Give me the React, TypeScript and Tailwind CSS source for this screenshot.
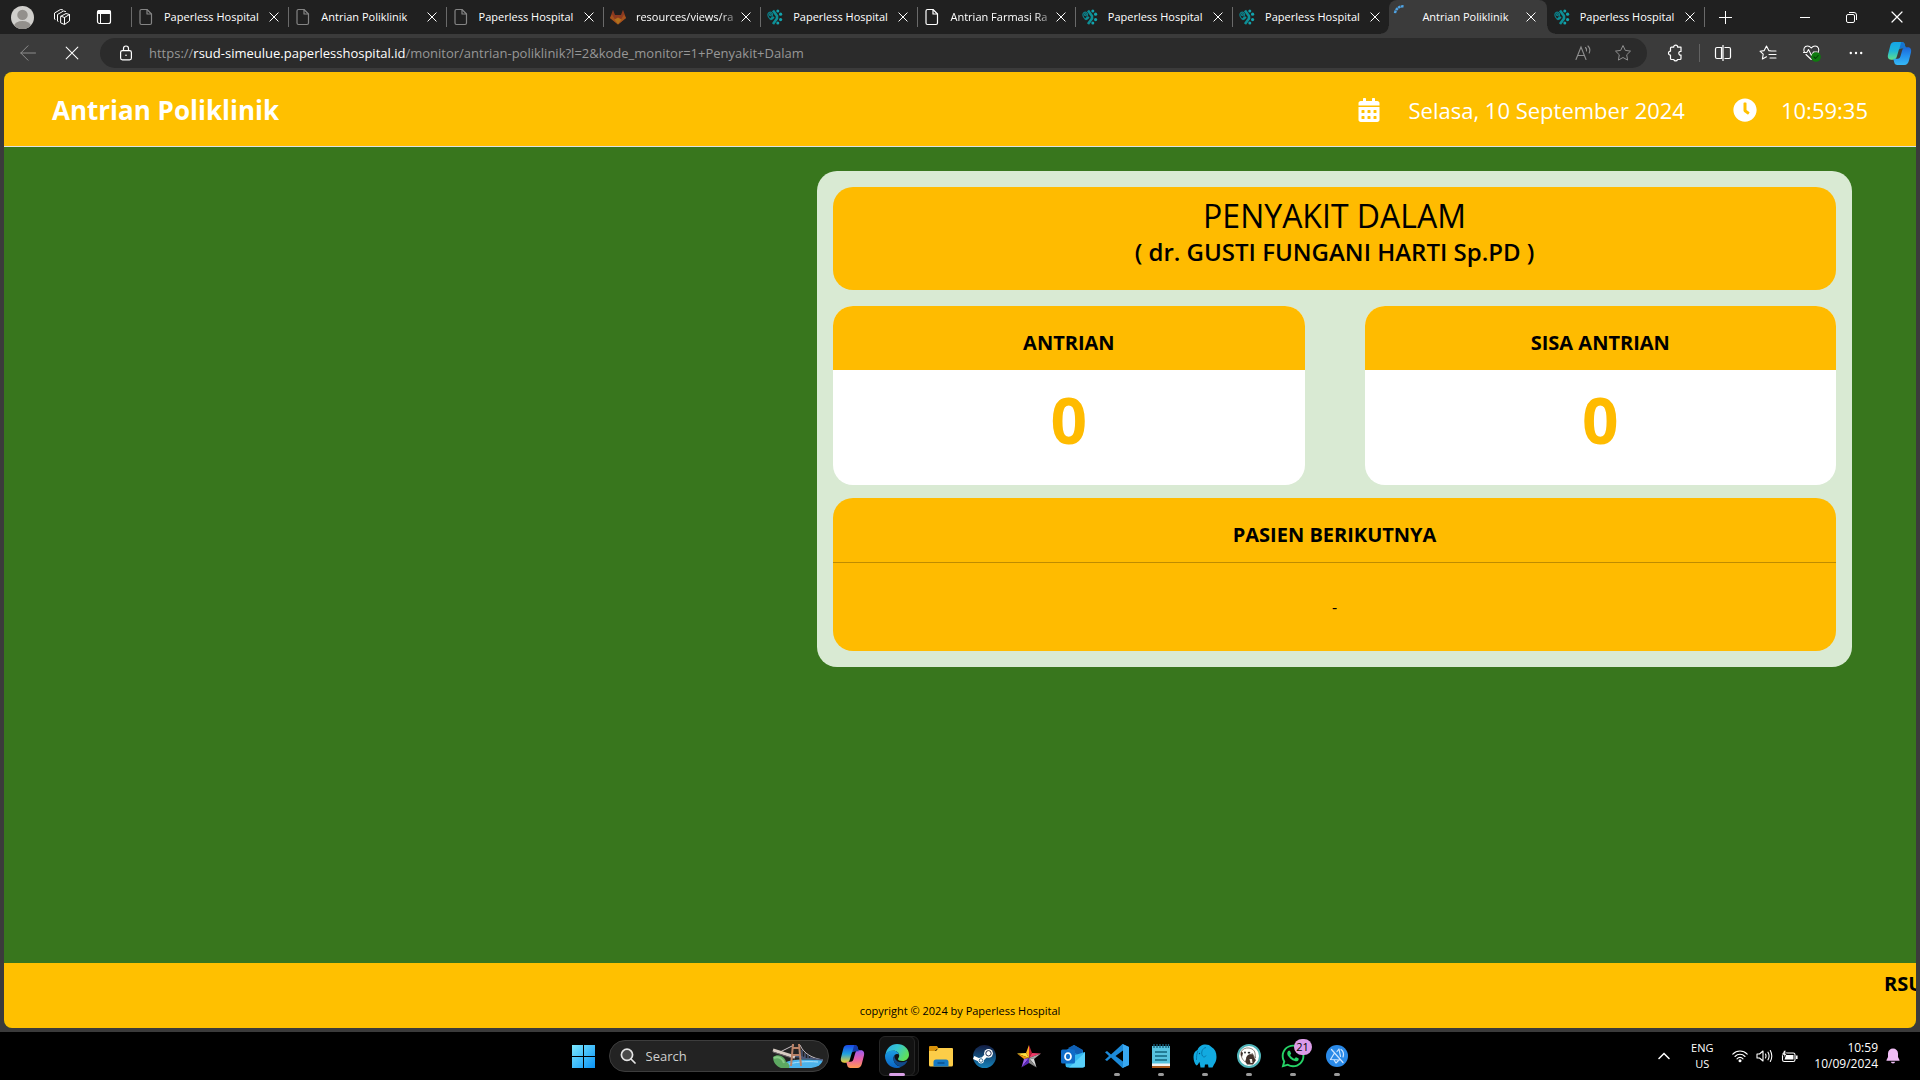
import React from "react";
import { FaCalendarAlt, FaClock, FaWhatsapp } from "react-icons/fa";

type TabIcon = "doc" | "docBright" | "gitlab" | "hospital" | "loading";

const TABS: { title: string; icon: TabIcon; active?: boolean }[] = [
  { title: "Paperless Hospital", icon: "doc" },
  { title: "Antrian Poliklinik", icon: "doc" },
  { title: "Paperless Hospital", icon: "doc" },
  { title: "resources/views/ra", icon: "gitlab" },
  { title: "Paperless Hospital", icon: "hospital" },
  { title: "Antrian Farmasi Ra", icon: "docBright" },
  { title: "Paperless Hospital", icon: "hospital" },
  { title: "Paperless Hospital", icon: "hospital" },
  { title: "Antrian Poliklinik", icon: "loading", active: true },
  { title: "Paperless Hospital", icon: "hospital" },
];

function Cross({ size, thin }: { size: number; thin?: boolean }) {
  return (
    <svg width={size} height={size} viewBox="0 0 12 12" fill="none" stroke="currentColor" strokeWidth={thin ? 0.9 : 1.2} strokeLinecap="round">
      <path d="M1 1l10 10M11 1L1 11" />
    </svg>
  );
}

function Favicon({ kind }: { kind: TabIcon }) {
  if (kind === "gitlab")
    return (
      <svg width="16" height="16" viewBox="0 0 16 16">
        <path d="M3 .8L5 6h6l2-5.200 3 8.200-8 6.500L0 9z" fill="#8c3a20" />
        <path d="M0 9l2-3.500L8 15.500zM16 9l-2-3.500L8 15.500z" fill="#a4521c" />
        <path d="M4.500 10.500L8 8.500l3.500 2L8 15.500z" fill="#b0701c" />
      </svg>
    );
  if (kind === "hospital")
    return (
      <svg width="16" height="16" viewBox="0 0 16 16">
        <g fill="none" stroke="#0b7f88" strokeWidth="1.2">
          <path d="M3.5 10.5C1.2 8.6.4 6.400 1.200 4.500S4.500 2.600 5.300 4.500 5 8.500 3.500 10.500z" />
          <circle cx="3.400" cy="5.600" r="1" />
        </g>
        <path d="M6 1.500l4 5.500v2.500l-4 5.500" fill="none" stroke="#0d8f96" strokeWidth="2.600" strokeLinejoin="round" />
        <path d="M4 10.500l3-2.500" stroke="#0d8f96" strokeWidth="2" />
        <g fill="#12a3ad">
          <circle cx="10.800" cy="2" r="1.500" />
          <circle cx="13.600" cy="5.200" r="1.600" />
          <circle cx="13.600" cy="10.600" r="1.600" />
          <circle cx="10.800" cy="14" r="1.500" />
        </g>
      </svg>
    );
  if (kind === "loading")
    return (
      <svg width="18" height="18" viewBox="0 0 18 18">
        <path d="M2 7.500A8 8 0 0 1 11 .8" transform="translate(0 .6)" fill="none" stroke="#4fa3e3" strokeWidth="2.400" strokeDasharray="2.600 .5" />
      </svg>
    );
  return (
    <svg
      width="16"
      height="18"
      viewBox="0 0 16 18"
      fill="none"
      strokeWidth="1.200"
      strokeLinejoin="round"
      className={kind === "docBright" ? "stroke-white" : "stroke-[#858585]"}
    >
      <path d="M3.500 1.500h5.500l4.500 4.500v9a1.500 1.500 0 0 1-1.500 1.500h-8.500a1.500 1.500 0 0 1-1.500-1.500v-12a1.500 1.500 0 0 1 1.500-1.500z" />
      <path d="M9 1.500v4.500h4.500" />
    </svg>
  );
}

function TabStrip() {
  return (
    <div className="flex h-[34px] flex-none bg-[#202020] text-white">
      <div className="flex w-[131px] flex-none items-center pl-0.5">
        <button aria-label="Profile" className="flex w-10 justify-center">
          <svg width="23" height="23" viewBox="0 0 22 22">
            <clipPath id="face"><circle cx="11" cy="11" r="11" /></clipPath>
            <g clipPath="url(#face)">
              <rect width="22" height="22" fill="#d0cfcc" />
              <circle cx="11" cy="8.500" r="5" fill="#93908c" />
              <ellipse cx="11" cy="19" rx="8" ry="4.600" fill="#93908c" />
            </g>
          </svg>
        </button>
        <button aria-label="Workspaces" className="flex w-10 justify-center">
          <svg width="18" height="18" viewBox="0 0 18 18" fill="none" stroke="#fff" strokeLinejoin="round" strokeLinecap="round">
            <path d="M8 8.200l5-2.700 3.500 1v6.500l-5 3.500-3.500-1.500z" />
            <path d="M5 13.500l-.5-.5V6.500l6-3.500 2 .5M2 11.500l-.5-.5V5L7.500 1.500l2 .3" />
            <path d="M8 8.200l3.500 1.300v6.500M11.500 9.500l5-3" />
          </svg>
        </button>
        <button aria-label="Tab actions" className="flex w-11 justify-center">
          <svg width="16" height="16" viewBox="0 0 16 16">
            <rect x="1.500" y="1.500" width="13" height="13" rx="2" fill="none" stroke="#fff" strokeWidth="1.200" />
            <path d="M1 3a2 2 0 0 1 2-2h10a2 2 0 0 1 2 2v2H1z" fill="#fff" />
            <path d="M4.500 5v10" stroke="#fff" />
          </svg>
        </button>
      </div>
      <div role="tablist" className="flex min-w-0 flex-1">
        {TABS.map((tab, i) => (
          <div
            key={i}
            className={
              tab.active
                ? "relative flex min-w-0 flex-1 items-center rounded-t-lg bg-[#3b3b3b] pr-2 pl-1"
                : "relative flex min-w-0 flex-1 items-center px-1.5"
            }
          >
            {!tab.active && i !== 9 && <span className="absolute top-[7px] left-0 h-5 w-px bg-[#6a6a6a]" />}
            {tab.active && (
              <>
                <span className="absolute bottom-0 -left-2 size-2 bg-[radial-gradient(circle_at_0_0,#202020_7px,#3b3b3b_8px)]" />
                <span className="absolute -right-2 bottom-0 size-2 bg-[radial-gradient(circle_at_100%_0,#202020_7px,#3b3b3b_8px)]" />
              </>
            )}
            <button role="tab" aria-selected={!!tab.active} className="flex min-w-0 flex-1 items-center text-left">
              <span className={tab.active ? "mb-1.5 flex w-[18px] flex-none justify-center" : "flex w-[18px] flex-none justify-center"}>
                <Favicon kind={tab.icon} />
              </span>
              <span
                className={
                  (tab.active ? "ml-[11px] " : "ml-[9px] ") +
                  "flex-1 overflow-hidden text-[11px] leading-4 whitespace-nowrap" +
                  (tab.title.endsWith("ra") || tab.title.endsWith("Ra")
                    ? " [mask-image:linear-gradient(to_right,#000_82%,#0003_100%)]"
                    : "")
                }
              >
                {tab.title}
              </span>
            </button>
            <button aria-label="Close tab" className="flex size-4 flex-none items-center justify-center">
              <Cross size={10} />
            </button>
          </div>
        ))}
      </div>
      <div className="flex w-[216px] flex-none">
        <button aria-label="New tab" className="relative flex w-[42px] items-center justify-center">
          <span className="absolute top-[7px] left-0 h-5 w-px bg-[#6a6a6a]" />
          <svg width="15" height="15" viewBox="0 0 15 15" stroke="#fff"><path d="M7.500 1v13M1 7.500h13" /></svg>
        </button>
        <div className="ml-auto flex">
          <button aria-label="Minimize" className="flex w-[46px] items-center justify-center">
            <span className="h-px w-2.5 bg-white" />
          </button>
          <button aria-label="Restore" className="flex w-[46px] items-center justify-center">
            <svg width="11" height="11" viewBox="0 0 11 11" fill="none" stroke="#fff">
              <rect x=".5" y="2.500" width="8" height="8" rx="1.500" />
              <path d="M3 .5h5a2.500 2.500 0 0 1 2.500 2.500v5" />
            </svg>
          </button>
          <button aria-label="Close" className="flex w-[46px] items-center justify-center"><Cross size={12} /></button>
        </div>
      </div>
    </div>
  );
}

function CopilotMark({ id, stops }: { id: string; stops: string[] }) {
  return (
    <svg width="25" height="25" viewBox="0 0 24 24">
      <defs>
        <linearGradient id={id + "a"} x1="0" y1="0" x2="0" y2="1">
          <stop stopColor={stops[0]} /><stop offset=".5" stopColor={stops[1]} /><stop offset="1" stopColor={stops[2]} />
        </linearGradient>
        <linearGradient id={id + "b"} x1="0" y1="0" x2="0" y2="1">
          <stop stopColor={stops[3]} /><stop offset=".5" stopColor={stops[4]} /><stop offset="1" stopColor={stops[5]} />
        </linearGradient>
      </defs>
      <path d="M14 1c2 0 2.600 1 3.100 2.600L18 7h-4c-2 0-2.600 1-3 2.500l-1.300 4.700C9 16.500 8 18 6 18H4c-3 0-3.600-2.500-3-5L3 5c.7-2.600 1.700-4 4.500-4z" fill={`url(#${id}a)`} />
      <path d="M10 23c-2 0-2.600-1-3.100-2.600L6 17h4c2 0 2.600-1 3-2.500l1.300-4.700C15 7.500 16 6 18 6h2c3 0 3.600 2.500 3 5l-2 8c-.7 2.600-1.700 4-4.500 4z" fill={`url(#${id}b)`} />
      <path d="M14 1c2 0 2.600 1 3.100 2.600L18 7h-4c-1.200 0-1.900.4-2.400 1.200L13 3.400C13.400 2 13.500 1 14 1z" fill={stops[6]} />
    </svg>
  );
}

const STAR = "M9 1.500l2.300 4.900 5.200.7-3.800 3.700.9 5.300L9 13.500l-4.600 2.600.9-5.300L1.500 7.100l5.200-.7z";

function Toolbar() {
  return (
    <div className="flex h-[38px] flex-none items-center bg-[#3b3b3b] text-white">
      <button aria-label="Back" className="ml-1.5 flex w-11 justify-center text-[#8d8d8d]">
        <svg width="16" height="16" viewBox="0 0 16 16" fill="none" stroke="currentColor" strokeLinecap="round"><path d="M15.500 8H.8M8 .8L.8 8 8 15.200" /></svg>
      </button>
      <button aria-label="Stop" className="flex w-11 justify-center"><Cross size={14} thin /></button>
      <div className="ml-1.5 flex h-[30px] min-w-0 flex-1 items-center rounded-full bg-[#2b2b2b] pr-1 pl-4">
        <button aria-label="Site information" className="flex w-5 flex-none justify-center">
          <svg width="14" height="16" viewBox="0 0 14 16" fill="none" stroke="#fff" strokeWidth="1.200">
            <rect x="1.600" y="5.600" width="10.800" height="9.300" rx="1.800" />
            <path d="M4.500 5.500V3.500a2.500 2.500 0 0 1 5 0v2" />
            <circle cx="7" cy="10.300" r=".8" fill="#fff" stroke="none" />
          </svg>
        </button>
        <div role="textbox" aria-label="Address" className="ml-[13px] min-w-0 flex-1 overflow-hidden text-[13px] leading-5 whitespace-nowrap text-[#979797]">
          https://<span className="text-white">rsud-simeulue.paperlesshospital.id</span>/monitor/antrian-poliklinik?l=2&amp;kode_monitor=1+Penyakit+Dalam
        </div>
        <button aria-label="Read aloud" className="flex w-10 justify-center">
          <svg width="17" height="16" viewBox="0 0 17 16" fill="none" stroke="#8f8f8f" strokeWidth="1.100" strokeLinecap="round">
            <path d="M1 14.500L6 2l5 12.500M2.800 10.500h6.500M10.500 2.500q1.500 1.500 1 3.500M13 1q3 3 1.200 7" />
          </svg>
        </button>
        <button aria-label="Add to favorites" className="flex w-10 justify-center">
          <svg width="18" height="18" viewBox="0 0 18 18" fill="none" stroke="#8f8f8f" strokeLinejoin="round"><path d={STAR} /></svg>
        </button>
      </div>
      <button aria-label="Extensions" className="ml-1.5 flex w-11 justify-center">
        <svg width="18" height="18" viewBox="0 0 18 18" fill="none" stroke="#fff" strokeWidth="1.200" strokeLinejoin="round">
          <path d="M5.500 3.200h2.200a2 2 0 0 1 4 0H15v4.300a1.800 1.800 0 1 0 0 3.500v3.500a1 1 0 0 1-1 1h-2.500a1.900 1.900 0 0 1-3.700 0H5.500a1 1 0 0 1-1-1v-3.300a2 2 0 0 1 0-4V4.200a1 1 0 0 1 1-1z" />
        </svg>
      </button>
      <span className="ml-0.5 h-[18px] w-px bg-[#626262]" />
      <button aria-label="Split screen" className="flex w-[46px] justify-center">
        <svg width="18" height="18" viewBox="0 0 18 18" fill="none" stroke="#fff" strokeWidth="1.200">
          <path d="M7.500 3.500H3A1.500 1.500 0 0 0 1.500 5v8A1.500 1.500 0 0 0 3 14.500h4.500zM10.500 3.500H15A1.500 1.500 0 0 1 16.500 5v8a1.500 1.500 0 0 1-1.500 1.500h-4.500M9 1v16" />
        </svg>
      </button>
      <button aria-label="Favorites" className="flex w-11 justify-center">
        <svg width="18" height="18" viewBox="0 0 18 18" fill="none" stroke="#fff" strokeWidth="1.100" strokeLinejoin="round" strokeLinecap="round">
          <path d="M12.500 7L9.800 6.600 7.500 2 5.200 6.600 1 7.200l3.200 3-.8 4.800 4.100-2.200M11.500 7H17M10 10.500h7M11 14h6" />
        </svg>
      </button>
      <button aria-label="Browser essentials" className="flex w-11 justify-center">
        <svg width="20" height="19" viewBox="0 0 20 19" fill="none" stroke="#fff" strokeWidth="1.100" strokeLinejoin="round" strokeLinecap="round">
          <path d="M2.500 8.500C.8 5.500 2.300 2 5.500 2c1.800 0 3 1 3.800 2 .8-1 2-2 3.800-2 3.200 0 4.700 3.500 3 6.500M4 10.500l5.300 5M1.500 8.500h3.300L6.500 5.500l3 6 2-3.500H15" />
          <circle cx="14" cy="13" r="4.800" fill="#0f7b0f" stroke="none" />
          <path d="M12 13l1.500 1.500 2.700-3" stroke="#06400a" />
        </svg>
      </button>
      <button aria-label="Settings and more" className="flex w-11 justify-center">
        <svg width="14" height="4" viewBox="0 0 14 4" fill="#fff"><circle cx="1.800" cy="2" r="1.200" /><circle cx="7" cy="2" r="1.200" /><circle cx="12.200" cy="2" r="1.200" /></svg>
      </button>
      <button aria-label="Copilot" className="flex w-[42px] justify-center">
        <CopilotMark id="cpt" stops={["#14a5e8", "#1fb5d8", "#5fe08b", "#1c66d8", "#2492ee", "#36b8f5", "#1674d0"]} />
      </button>
    </div>
  );
}

function CounterCard({ title, value }: { title: string; value: number }) {
  return (
    <section className="min-w-0 flex-1 overflow-hidden rounded-[20px] bg-white text-center">
      <h3 className="bg-[#ffbb00] pt-[25px] pb-[15px] text-[20px] leading-6 font-bold text-black">{title}</h3>
      <p className="pt-1.5 pb-[21px] text-[64px] leading-[88px] font-bold text-[#ffbb00]">{value}</p>
    </section>
  );
}

function MonitorPage() {
  return (
    <div className="mx-1 mb-1 flex min-h-0 flex-1 flex-col overflow-hidden rounded-lg bg-[#38761d]">
      <header className="flex h-[75px] flex-none items-center border-b border-[#dee2e6] bg-[#ffc000] px-12 pt-0.5 text-white">
        <h1 className="text-[26px] leading-9 font-bold">Antrian Poliklinik</h1>
        <div className="ml-auto flex items-center text-[22px] leading-8">
          <FaCalendarAlt className="h-6 w-[22px]" />
          <span className="ml-7">Selasa, 10 September 2024</span>
          <FaClock className="ml-12 size-6" />
          <span className="ml-6">10:59:35</span>
        </div>
      </header>
      <main className="flex min-h-0 flex-1 justify-end pt-6 pr-16">
        <div className="flex w-[56%] flex-col self-start rounded-[20px] bg-[#d9ead3] p-4 text-black">
          <section className="rounded-[20px] bg-[#ffbb00] pt-[9px] pb-[22px] text-center">
            <h2 className="text-[32px] leading-10 font-medium">PENYAKIT DALAM</h2>
            <p className="text-[24px] leading-8 font-semibold">( dr. GUSTI FUNGANI HARTI Sp.PD )</p>
          </section>
          <div className="mt-4 flex gap-[60px]">
            <CounterCard title="ANTRIAN" value={0} />
            <CounterCard title="SISA ANTRIAN" value={0} />
          </div>
          <section className="mt-[13px] rounded-[20px] bg-[#ffbb00] text-center">
            <h3 className="border-b border-[#bf8c00] pt-[25px] pb-[15px] text-[20px] leading-6 font-bold">PASIEN BERIKUTNYA</h3>
            <p className="py-8 text-base leading-6">-</p>
          </section>
        </div>
      </main>
      <footer className="h-[65px] flex-none bg-[#ffc000] pt-1.5 text-black">
        <p className="overflow-hidden pl-[calc(100%-32px)] text-[20px] leading-[30px] font-bold whitespace-nowrap">RSU</p>
        <p className="pt-1 text-center text-[11px] leading-4">copyright © 2024 by Paperless Hospital</p>
      </footer>
    </div>
  );
}

function TaskButton({ label, running, children }: { label: string; running?: boolean; children: React.ReactNode }) {
  return (
    <button aria-label={label} className="relative flex h-12 w-11 items-center justify-center">
      {children}
      {running && <span className="absolute bottom-1 left-[19px] h-[3px] w-1.5 rounded-full bg-[#9a9a9a]" />}
    </button>
  );
}

function BridgeArt() {
  return (
    <svg width="52" height="26" viewBox="0 0 52 26">
      <path d="M8 24c4-8 20-8 43-7-2 6-8 8-14 8H12z" fill="#4db4ec" />
      <path d="M14 22c8-3 20-4 32-3" stroke="#a9e0fa" fill="none" />
      <path d="M1 14c6-4 12 0 13 5 3 1 4 4 3 6H9C4 23 1 19 1 14z" fill="#5da861" />
      <path d="M2 15c5-2 9 1 10 5" stroke="#87c985" strokeWidth="2" fill="none" />
      <path d="M22 2L8 9M28 2c4 9 12 13 23 15" stroke="#c9c0c4" strokeWidth="1" fill="none" />
      <path d="M20 13l31 4M30 7v9M33 10v6M36 12v4M39 14v2" stroke="#4c5a7c" strokeWidth="1.400" fill="none" />
      <path d="M1 7l22 7" stroke="#d8cdc4" strokeWidth="3" />
      <path d="M1 9l22 7" stroke="#6c6468" strokeWidth="1" />
      <path d="M21 1l-2 22M27 1l2 22M20 5h8M20 12h8" stroke="#b98268" strokeWidth="2" fill="none" />
    </svg>
  );
}

function Taskbar() {
  return (
    <div className="grid h-12 flex-none grid-cols-[1fr_auto_1fr] items-center bg-black text-white">
      <span />
      <div className="flex items-center">
        <TaskButton label="Start">
          <svg width="23" height="23" viewBox="0 0 23 23">
            <linearGradient id="win" x1="0" y1="0" x2="1" y2="1"><stop stopColor="#7be8ff" /><stop offset="1" stopColor="#0a93f5" /></linearGradient>
            <path d="M0 0h11v11H0zM12 0h11v11H12zM0 12h11v11H0zM12 12h11v11H12z" fill="url(#win)" />
          </svg>
        </TaskButton>
        <label className="mr-0.5 ml-[3px] flex h-8 w-[220px] items-center rounded-full border border-[#3d3d3d] bg-[#232323] pr-1 pl-2.5">
          <svg width="16" height="16" viewBox="0 0 16 16" fill="none" stroke="#e4e4e4" strokeWidth="1.700" strokeLinecap="round">
            <circle cx="7" cy="6.800" r="5.600" fill="#4a4a4a" /><path d="M11 11l4 4" />
          </svg>
          <input aria-label="Search" placeholder="Search" className="ml-2.5 min-w-0 flex-1 bg-transparent text-[13px] leading-5 outline-none placeholder:text-[#cfcfcf]" />
          <BridgeArt />
        </label>
        <TaskButton label="Copilot">
          <CopilotMark id="cpb" stops={["#1b49e8", "#1fa2e0", "#f0d030", "#9a5cf0", "#e860a8", "#ff9a50", "#1238a8"]} />
        </TaskButton>
        <button aria-label="Microsoft Edge" className="relative flex h-12 w-11 items-center justify-center">
          <span className="absolute inset-y-1 right-0 left-2 rounded-md border border-[#222222] bg-[#0b0b0b]" />
          <span className="absolute inset-y-1 right-1 left-1 rounded-md border border-[#262626] bg-[#121212]" />
          <svg width="24" height="24" viewBox="0 0 24 24" className="relative">
            <defs>
              <linearGradient id="e1" x1="0" y1="0" x2="1" y2=".5"><stop stopColor="#2aa9e8" /><stop offset=".5" stopColor="#35c6d0" /><stop offset="1" stopColor="#5fe05a" /></linearGradient>
              <linearGradient id="e2" x1="0" y1="0" x2="0" y2="1"><stop stopColor="#1b9de2" /><stop offset="1" stopColor="#0b63c4" /></linearGradient>
            </defs>
            <path d="M.5 11C1 4.500 6 0 12 0c7 0 12 5 12 10.500 0 4-3 6.500-6.500 6.500-3 0-4.500-1-4.500-2 0-.8 1.200-1.500 1.200-3.500 0-2.500-2.500-4.700-5.700-4.700C4.500 6.800 1.500 8.500.5 11z" fill="url(#e1)" />
            <path d="M0 12c0-3 3.500-5.600 8-5.600 3 0 5.500 1.800 6 4-1.500-1.200-5.500-.4-5.500 4.100 0 4.500 3.500 8 8 8-1.500 1-3 1.500-4.500 1.500C5 24 0 18.500 0 12z" fill="url(#e2)" />
            <path d="M10 10.500c-1 1-1.500 2.500-1.500 4 0 4.500 3.800 8.300 8.300 8 2.200-1 4.200-2.700 5.400-5 .3-.6-.2-.8-.6-.6-4.500 2.300-10.600 1.400-11.800-3-.3-1.300-.3-2.300.2-3.400z" fill="#114a8b" />
          </svg>
          <span className="absolute bottom-1 left-3.5 h-[3px] w-4 rounded-full bg-[#d9a0e6]" />
        </button>
        <TaskButton label="File Explorer">
          <svg width="24" height="22" viewBox="0 0 24 22">
            <path d="M0 2a1 1 0 0 1 1-1h7l2 3h-2L6 6H0z" fill="#d9920a" />
            <path d="M0 6h7l2.500-3H23a1 1 0 0 1 1 1v16a1.500 1.500 0 0 1-1.500 1.500h-21A1.500 1.500 0 0 1 0 20z" fill="#fdcd48" />
            <path d="M4.500 21.500V17a2.500 2.500 0 0 1 2.500-2.500h10a2.500 2.500 0 0 1 2.500 2.500v4.500z" fill="#1579c4" />
            <path d="M8.500 18h7" stroke="#0a4f8c" strokeWidth="1.500" />
          </svg>
        </TaskButton>
        <TaskButton label="Steam">
          <svg width="23" height="23" viewBox="0 0 23 23">
            <linearGradient id="stm" x1="0" y1="0" x2="0" y2="1"><stop stopColor="#131c42" /><stop offset="1" stopColor="#1580b8" /></linearGradient>
            <circle cx="11.500" cy="11.500" r="11.500" fill="url(#stm)" />
            <path d="M.6 12.500l7.400 3.200 5.500-5.700" stroke="#fff" strokeWidth="3.400" fill="none" strokeLinejoin="round" />
            <circle cx="15.500" cy="8.300" r="4.400" fill="#fff" /><circle cx="15.500" cy="8.300" r="2.700" fill="#fff" stroke="#1b2a50" strokeWidth="1" />
            <circle cx="8" cy="15.500" r="2.900" fill="#fff" /><circle cx="8" cy="15.500" r="1.800" fill="none" stroke="#1b5580" strokeWidth=".8" />
          </svg>
        </TaskButton>
        <TaskButton label="Star">
          <svg width="24" height="23" viewBox="0 0 24 23">
            <path d="M12 0L9 8l3 5z" fill="#ffb020" /><path d="M12 0l3 8-3 5z" fill="#c0203a" />
            <path d="M0 8.500L9 8l3 5z" fill="#ffe040" /><path d="M0 8.500l7 5.500 5-1z" fill="#f59a10" />
            <path d="M24 8.500L15 8l-3 5z" fill="#f03a68" /><path d="M24 8.500L17 14l-5-1z" fill="#a8a8a8" />
            <path d="M4.500 22.500L7 14l5-1z" fill="#a060f0" /><path d="M4.500 22.500L12 18v-5z" fill="#5a28b8" />
            <path d="M19.500 22.500L17 14l-5-1z" fill="#d8d8d8" /><path d="M19.500 22.500L12 18v-5z" fill="#8a8a8a" />
          </svg>
        </TaskButton>
        <TaskButton label="Outlook">
          <svg width="24" height="23" viewBox="0 0 24 23">
            <path d="M4 6l9-6 9 5.500V14H4z" fill="#1581d4" />
            <path d="M7 3l13 9 2-7-9-5z" fill="#0f5fb4" />
            <path d="M4.500 13L24 7v13a2.500 2.500 0 0 1-2.500 2.500H7A2.500 2.500 0 0 1 4.500 20z" fill="#35b9f1" />
            <path d="M24 7.500L8 22.500h13.500A2.500 2.500 0 0 0 24 20z" fill="#58d0fa" />
            <rect y="4.500" width="14" height="14" rx="1.500" fill="#0f6cc8" />
            <ellipse cx="7" cy="11.500" rx="3" ry="3.500" fill="none" stroke="#fff" strokeWidth="1.700" />
          </svg>
        </TaskButton>
        <TaskButton label="Visual Studio Code" running>
          <svg width="24" height="24" viewBox="0 0 24 24">
            <path d="M17.500 0L24 3v18l-6.500 3L6 13.500 2 17 0 15.800 4 12 0 8.200 2 7l4 3.500zM18 6.500L10.500 12l7.500 5.500z" fill="#1c8ad8" fillRule="evenodd" />
            <path d="M17.500 0L24 3v18l-6.500 3 .5-1.500v-21z" fill="#38a8f2" />
          </svg>
        </TaskButton>
        <TaskButton label="Notepad" running>
          <svg width="20" height="24" viewBox="0 0 20 24">
            <path d="M1 2h18v20H1z" fill="#58c3df" />
            <path d="M1 19.500h18V22H1z" fill="#f2f2f2" /><path d="M1 22h18v2H1z" fill="#a8581c" />
            <path d="M3 0v4M6 0v4M9 0v4M12 0v4M15 0v4M17.500 0v4" stroke="#18607c" strokeWidth="1.300" />
            <path d="M4 8h12M4 12h12M4 16h12" stroke="#12667e" strokeWidth="1.700" />
          </svg>
        </TaskButton>
        <TaskButton label="Elephant" running>
          <svg width="24" height="24" viewBox="0 0 24 24">
            <path d="M.5 13C.5 9.500 2 7 4.500 6 5.500 2.500 9 .5 12.500.5c2.500 0 4.500.8 6 2.500 3.500 2 5 5.500 5 10 0 3.500-1 5.500-2.500 7.500l-1.500 3h-4l-.5-3h-3l-.5 3H7.500L6.500 18c-1 .5-1 3-3 3.500C1.500 20 .5 16 .5 13z" fill="#12aae0" />
            <path d="M13 3.500c-3.500.5-5.500 5-3.500 8.500 1 1.500 3 1 3.500-.5M5 7c-1.500 3-1.500 6-1.500 9" fill="none" stroke="#0778ac" strokeWidth="1" />
            <circle cx="6.500" cy="9.500" r=".7" fill="#054a70" />
          </svg>
        </TaskButton>
        <TaskButton label="DBeaver" running>
          <svg width="24" height="24" viewBox="0 0 24 24">
            <circle cx="12" cy="12" r="11" fill="#fff" stroke="#4fb3b8" strokeWidth="2" />
            <path d="M4 8c1-3 5-4.500 8-4s5.500 2 6 5l.5 5c-1.500-.5-2-3-3-4.500-1.500 1-4 1-5.500 3.500L8.500 18C5.500 16.500 3.500 12 4 8z" fill="#fff" stroke="#5e5148" strokeWidth=".7" />
            <path d="M9.500 13c1.500-3 4-2.500 6-3 1.500 2 2 5 3.500 6l-3 4.500H10L8.500 18z" fill="#41302a" />
            <path d="M12.500 15l1 4h2l-.5-4z" fill="#f4efe8" />
            <circle cx="8" cy="8.500" r=".9" fill="#222" /><ellipse cx="12" cy="8.700" rx="1.300" ry=".9" fill="#222" /><path d="M4.500 7.500c-1 2-1 4 .5 5.500l1-4z" fill="#41302a" />
          </svg>
        </TaskButton>
        <TaskButton label="WhatsApp" running>
          <FaWhatsapp className="size-[26px] text-[#25d366]" />
          <span className="absolute top-[7px] left-[23px] h-4 w-[18px] rounded-full bg-[#dc9ce8] text-center text-[11px] leading-4 text-black">21</span>
        </TaskButton>
        <TaskButton label="Signal" running>
          <svg width="22" height="22" viewBox="0 0 22 22" fill="none" stroke="#cfe6ff" strokeWidth="1.200" strokeLinejoin="round" strokeLinecap="round">
            <circle cx="11" cy="11" r="11" fill="#2a8ae8" stroke="none" />
            <path d="M5.500 4.500l11.500 13M8.500 8L4.500 14.500l9.500 .5M8 15l2 3 2.500-2.500M11 6.500l2-2.500 1.500 7.500M15 4.500c2 1.500 3 4.500 2 7.500M17 6.500" />
          </svg>
        </TaskButton>
      </div>
      <div className="flex items-center justify-end pr-5 text-[12px] leading-4">
        <button aria-label="Show hidden icons" className="flex w-8 justify-center">
          <svg width="12" height="8" viewBox="0 0 12 8" fill="none" stroke="#fff" strokeWidth="1.500" strokeLinecap="round"><path d="M1 6.500l5-5 5 5" /></svg>
        </button>
        <button className="ml-2 w-7 text-center text-[11px]">ENG<br />US</button>
        <button aria-label="Network, sound and battery" className="ml-4 flex items-center gap-2">
          <svg width="16" height="14" viewBox="0 0 16 14" fill="none" stroke="#fff" strokeWidth="1.100" strokeLinecap="round">
            <path d="M.8 5.200c4-4.200 10.400-4.200 14.400 0M3 7.500c2.800-3 7.200-3 10 0M5 9.800c1.700-1.900 4.300-1.900 6 0" /><circle cx="8" cy="11.800" r="1.500" fill="#fff" stroke="none" />
          </svg>
          <svg width="17" height="14" viewBox="0 0 17 14" fill="none" stroke="#fff" strokeWidth="1.100" strokeLinecap="round" strokeLinejoin="round">
            <path d="M1 5h2.500L7 2v10L3.500 9H1zM9.500 5q1 2 0 4M12 3.200q2.200 3.800 0 7.600M14.300 1.500q3 5.500 0 11" />
          </svg>
          <svg width="17" height="13" viewBox="0 0 17 13" fill="none" stroke="#fff" strokeWidth="1.100">
            <rect x="1.500" y="3" width="12.500" height="8.500" rx="1.800" /><path d="M15.800 5.500v3.500" strokeWidth="1.600" />
            <path d="M5 5h7.500v4.500H3.500z" fill="#fff" stroke="none" /><path d="M3 .5L1 5h2.200L2.500 8 6 3.500H4L5 .5z" fill="#fff" stroke="#000" strokeWidth=".5" />
          </svg>
        </button>
        <button className="ml-4 text-right">10:59<br />10/09/2024</button>
        <button aria-label="Notifications" className="ml-2">
          <svg width="14" height="16" viewBox="0 0 14 16" fill="#f0bdf5">
            <path d="M7 .5A5 5 0 0 0 2 5.500V9L.5 12v.8h13V12L12 9V5.500A5 5 0 0 0 7 .5zM4.800 13.800a2.300 2.300 0 0 0 4.400 0z" />
          </svg>
        </button>
      </div>
    </div>
  );
}

export default function App() {
  return (
    <div className="flex h-screen flex-col overflow-hidden bg-[#3b3b3b] font-['Open_Sans','Noto_Sans',sans-serif]">
      <TabStrip />
      <Toolbar />
      <MonitorPage />
      <Taskbar />
    </div>
  );
}
